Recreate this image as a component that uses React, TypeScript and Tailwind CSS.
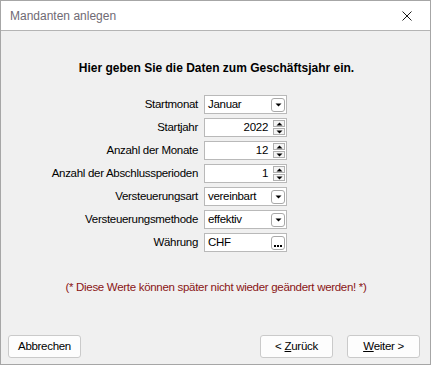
import React from "react";

function DownTri() {
  return (
    <svg width="7" height="4" viewBox="0 0 7 4" className="block">
      <polygon points="0.5,0.5 6.5,0.5 3.5,3.5" fill="#000" />
    </svg>
  );
}

function UpTri() {
  return (
    <svg width="7" height="4" viewBox="0 0 7 4" className="block">
      <polygon points="0.5,3.5 6.5,3.5 3.5,0.5" fill="#000" />
    </svg>
  );
}

function Select({ value }: { value: string }) {
  return (
    <div className="h-[19px] w-[83px] bg-white border border-[#b9b9b9] flex items-center justify-between pl-[3px] pr-[1px]">
      <span className="leading-none">{value}</span>
      <div className="w-[14px] h-[14px] rounded-[3px] border border-[#a9a9a9] bg-white flex items-center justify-center">
        <DownTri />
      </div>
    </div>
  );
}

function Spin({ value }: { value: string }) {
  return (
    <div className="h-[19px] w-[83px] bg-white border border-[#b9b9b9] flex items-center justify-end pr-[1px]">
      <span className="leading-none mr-[5px]">{value}</span>
      <div className="flex flex-col gap-[1px]">
        <div className="w-[12px] h-[7px] border border-[#b0b0b0] bg-[#f4f4f4] flex items-center justify-center">
          <UpTri />
        </div>
        <div className="w-[12px] h-[7px] border border-[#b0b0b0] bg-[#f4f4f4] flex items-center justify-center">
          <DownTri />
        </div>
      </div>
    </div>
  );
}

function Ellipsis({ value }: { value: string }) {
  return (
    <div className="h-[19px] w-[83px] bg-white border border-[#b9b9b9] flex items-center justify-between pl-[3px] pr-[1px]">
      <span className="leading-none">{value}</span>
      <div className="w-[14px] h-[14px] rounded-[3px] border border-[#a9a9a9] bg-white flex items-end justify-center pb-[2px]">
        <div className="flex gap-[1px]">
          <div className="w-[2px] h-[2px] bg-black" />
          <div className="w-[2px] h-[2px] bg-black" />
          <div className="w-[2px] h-[2px] bg-black" />
        </div>
      </div>
    </div>
  );
}

function Label({ text }: { text: string }) {
  return (
    <div className="h-[19px] flex items-center justify-end leading-none whitespace-nowrap">
      {text}
    </div>
  );
}

function Btn({ children }: { children: React.ReactNode }) {
  return (
    <button className="w-[73px] h-[23px] rounded-[3px] border border-[#cacaca] bg-[#fdfdfd] flex items-center justify-center leading-none text-black">
      {children}
    </button>
  );
}

export default function App() {
  return (
    <div className="w-[431px] h-[365px] border border-[#a6a6a6] flex flex-col bg-[#f0f0f0] font-['Liberation_Sans',Arial,sans-serif] text-[11.5px] tracking-[-0.3px] text-black overflow-hidden">
      <div className="h-[30px] shrink-0 bg-white border-b border-[#b4b4b4] flex items-center justify-between pl-[9px] pr-[18px]">
        <span className="text-[12px] tracking-normal text-[#6f6a74] leading-none">Mandanten anlegen</span>
        <svg width="10" height="10" viewBox="0 0 10 10">
          <path d="M0.5 0.5 L9.5 9.5 M9.5 0.5 L0.5 9.5" stroke="#1a1a1a" strokeWidth="1" />
        </svg>
      </div>
      <div className="flex-1 flex flex-col">
        <div className="mt-[30px] h-[14px] leading-[14px] text-center font-bold text-[12px] tracking-normal pl-[2px]">
          Hier geben Sie die Daten zum Geschäftsjahr ein.
        </div>
        <div className="mt-[20px] grid grid-cols-[197px_83px] gap-x-[6px] gap-y-[4px]">
          <Label text="Startmonat" />
          <Select value="Januar" />
          <Label text="Startjahr" />
          <Spin value="2022" />
          <Label text="Anzahl der Monate" />
          <Spin value="12" />
          <Label text="Anzahl der Abschlussperioden" />
          <Spin value="1" />
          <Label text="Versteuerungsart" />
          <Select value="vereinbart" />
          <Label text="Versteuerungsmethode" />
          <Select value="effektiv" />
          <Label text="Währung" />
          <Ellipsis value="CHF" />
        </div>
        <div className="mt-[28px] h-[14px] leading-[14px] text-center text-[#8a1515] pl-[1px]">
          (* Diese Werte können später nicht wieder geändert werden! *)
        </div>
        <div className="flex-1" />
        <div className="flex items-center pl-[7px] pr-[10px] pb-[6px]">
          <Btn>Abbrechen</Btn>
          <div className="flex-1" />
          <Btn>
            &lt; <span className="underline ml-[3px]">Z</span>urück
          </Btn>
          <div className="w-[14px]" />
          <Btn>
            <span className="underline">W</span>eiter &gt;
          </Btn>
        </div>
      </div>
    </div>
  );
}
